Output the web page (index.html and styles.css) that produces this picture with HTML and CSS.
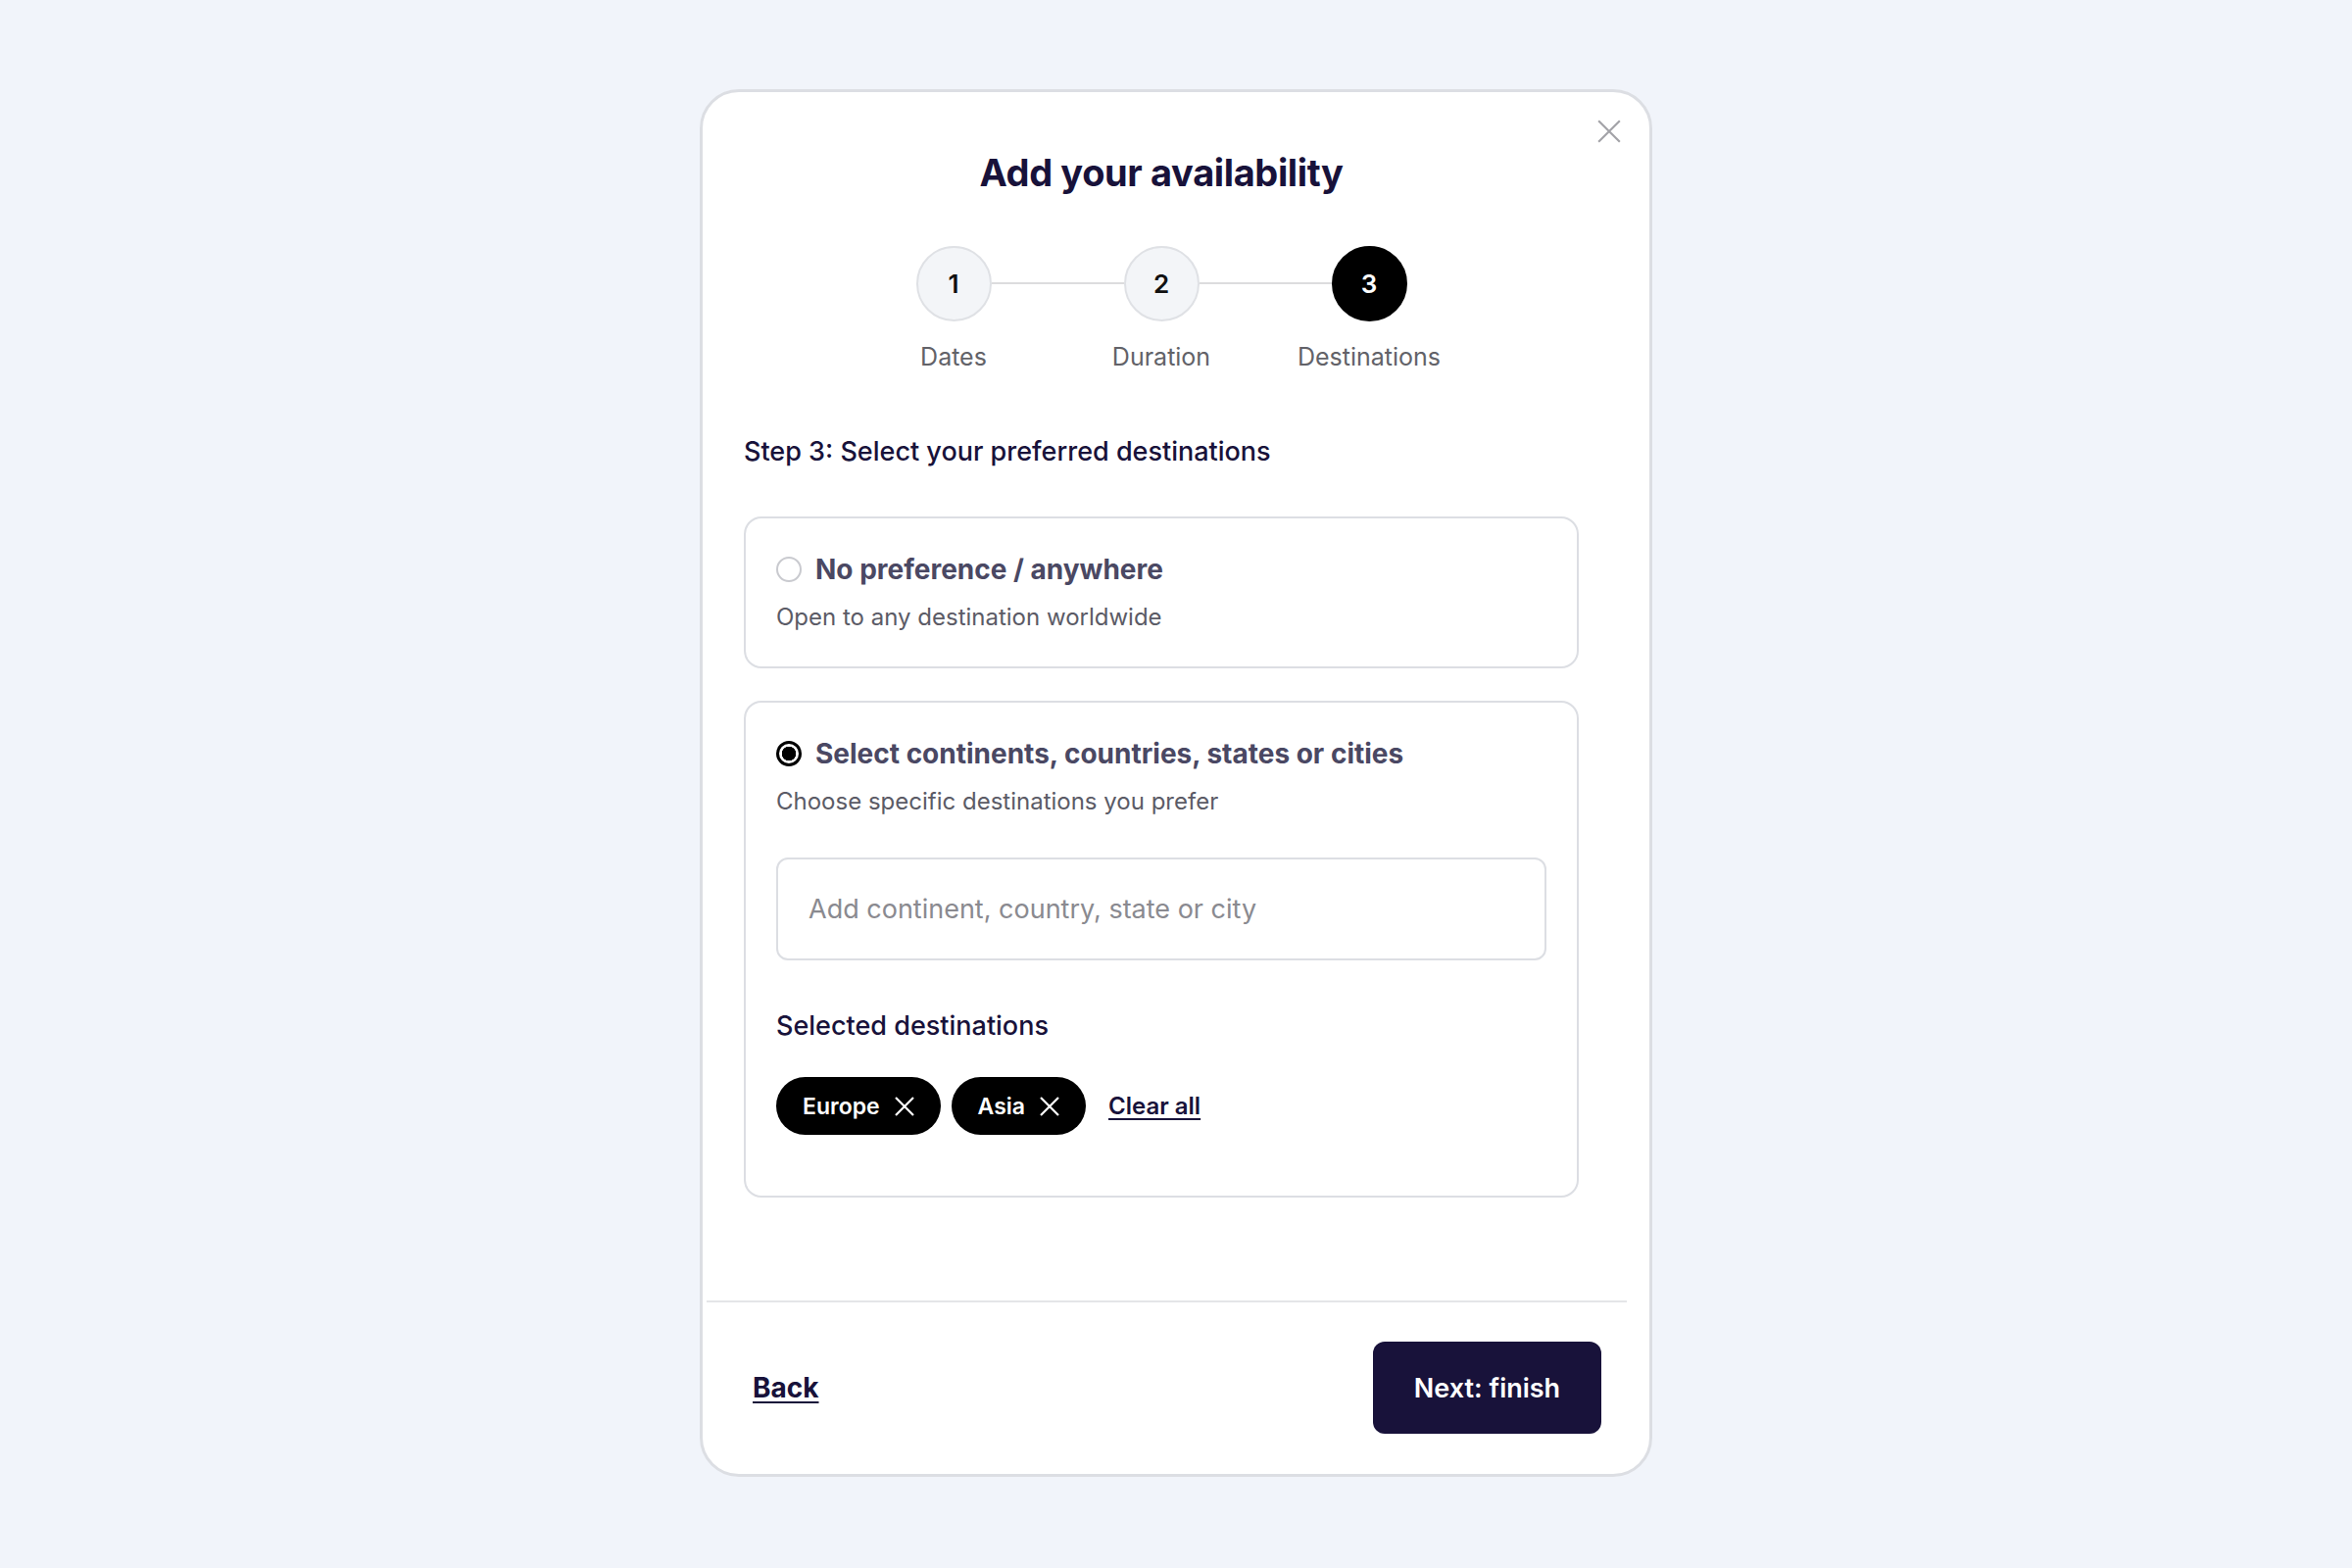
FILE: index.html
```html
<!DOCTYPE html>
<html lang="en">
<head>
    <meta charset="UTF-8">
    <meta name="viewport" content="width=device-width, initial-scale=1.0">
    <title>Add your availability</title>
    <link rel="stylesheet" href="styles.css">
</head>
<body>
    <div class="modal">
        <button class="close-btn" aria-label="Close">
            <svg viewBox="0 0 24 24" width="26" height="26"><path d="M2 2L22 22M22 2L2 22" stroke="currentColor" stroke-width="2" fill="none"/></svg>
        </button>

        <div class="modal-body">
            <h1 class="modal-title">Add your availability</h1>

            <div class="stepper">
                <div class="step">
                    <div class="step-circle">1</div>
                    <div class="step-label">Dates</div>
                </div>
                <div class="step-line"></div>
                <div class="step">
                    <div class="step-circle">2</div>
                    <div class="step-label">Duration</div>
                </div>
                <div class="step-line"></div>
                <div class="step">
                    <div class="step-circle active">3</div>
                    <div class="step-label">Destinations</div>
                </div>
            </div>

            <h2 class="step-heading">Step 3: Select your preferred destinations</h2>

            <div class="option-card">
                <div class="option-head">
                    <span class="radio"></span>
                    <span class="option-title">No preference / anywhere</span>
                </div>
                <p class="option-desc">Open to any destination worldwide</p>
            </div>

            <div class="option-card">
                <div class="option-head">
                    <span class="radio checked"></span>
                    <span class="option-title">Select continents, countries, states or cities</span>
                </div>
                <p class="option-desc">Choose specific destinations you prefer</p>

                <input class="search-input" type="text" placeholder="Add continent, country, state or city">

                <h3 class="selected-title">Selected destinations</h3>
                <div class="chips">
                    <span class="chip">Europe
                        <svg viewBox="0 0 24 24" width="24" height="24"><path d="M3 3L21 21M21 3L3 21" stroke="currentColor" stroke-width="2.2" fill="none"/></svg>
                    </span>
                    <span class="chip">Asia
                        <svg viewBox="0 0 24 24" width="24" height="24"><path d="M3 3L21 21M21 3L3 21" stroke="currentColor" stroke-width="2.2" fill="none"/></svg>
                    </span>
                    <a href="#" class="clear-all">Clear all</a>
                </div>
            </div>
        </div>

        <div class="modal-footer">
            <a href="#" class="back-link">Back</a>
            <button class="next-btn">Next: finish</button>
        </div>
    </div>
</body>
</html>
```

FILE: styles.css
```css
:root {
    --navy: #18123a;
    --text-muted: #5b5b66;
    --option-text: #4a4863;
    --border: #dcdee3;
    --background: #f1f4fa;
}

* {
    margin: 0;
    padding: 0;
    box-sizing: border-box;
}

body {
    font-family: 'Inter', sans-serif;
    background: var(--background);
    color: var(--navy);
    padding-top: 91px;
}

.modal {
    position: relative;
    width: 972px;
    margin: 0 auto;
    background: #fff;
    border: 3px solid var(--border);
    border-radius: 40px;
    padding-bottom: 41px;
}

.close-btn {
    position: absolute;
    top: 27px;
    right: 28px;
    background: none;
    border: none;
    color: #a3a3a8;
}

.modal-body {
    padding: 57px 72px 0 42px;
}

.modal-title {
    text-align: center;
    font-size: 38px;
    font-weight: 700;
    letter-spacing: -0.01em;
    line-height: 50px;
}

/* stepper */
.stepper {
    display: flex;
    justify-content: center;
    align-items: flex-start;
    margin-top: 50px;
}

.step {
    display: flex;
    flex-direction: column;
    align-items: center;
    width: 77px;
}

.step-circle {
    width: 77px;
    height: 77px;
    border-radius: 50%;
    border: 2px solid #dfe1e5;
    background: #f3f5f8;
    display: flex;
    align-items: center;
    justify-content: center;
    font-size: 26px;
    font-weight: 600;
    color: #111;
}

.step-circle.active {
    background: #000;
    border-color: #000;
    color: #fff;
}

.step-label {
    margin-top: 20px;
    font-size: 25px;
    line-height: 32px;
    color: #626268;
    white-space: nowrap;
}

.step-line {
    width: 135px;
    height: 2px;
    background: #dcdcde;
    margin-top: 37px;
}

.step-heading {
    margin-top: 63px;
    font-size: 27px;
    font-weight: 500;
    line-height: 36px;
}

/* option cards */
.option-card {
    margin-top: 48px;
    border: 2px solid var(--border);
    border-radius: 18px;
    padding: 34px 31px 34px;
}

.option-card + .option-card {
    margin-top: 33px;
    padding-bottom: 62px;
}

.option-head {
    display: flex;
    align-items: center;
    gap: 14px;
    height: 36px;
}

.radio {
    width: 26px;
    height: 26px;
    border-radius: 50%;
    border: 2px solid #c9cacf;
    flex-shrink: 0;
}

.radio.checked {
    border: 3px solid #000;
    background: radial-gradient(circle, #000 0 7px, #fff 7.5px);
}

.option-title {
    font-size: 28px;
    font-weight: 700;
    color: var(--option-text);
}

.option-desc {
    margin-top: 15px;
    font-size: 24px;
    line-height: 32px;
    color: var(--text-muted);
}

.search-input {
    display: block;
    width: 100%;
    height: 105px;
    margin-top: 41px;
    border: 2px solid var(--border);
    border-radius: 12px;
    padding: 0 31px;
    font-family: inherit;
    font-size: 27px;
    color: var(--navy);
    outline: none;
}

.search-input::placeholder {
    color: #8a8a90;
}

.selected-title {
    margin-top: 49px;
    font-size: 27px;
    font-weight: 500;
    line-height: 36px;
}

.chips {
    display: flex;
    align-items: center;
    gap: 11px;
    margin-top: 34px;
}

.chip {
    display: inline-flex;
    align-items: center;
    gap: 13px;
    height: 59px;
    padding: 0 25px 0 27px;
    background: #000;
    color: #fff;
    border-radius: 30px;
    font-size: 23px;
    font-weight: 600;
}

.clear-all {
    margin-left: 12px;
    font-size: 24px;
    font-weight: 600;
    color: var(--navy);
    text-decoration-thickness: 2px;
    text-underline-offset: 4px;
}

/* footer */
.modal-footer {
    margin: 105px 23px 0 4px;
    border-top: 2px solid #e4e5e8;
    padding: 40px 26px 0 47px;
    display: flex;
    justify-content: space-between;
    align-items: center;
}

.back-link {
    font-size: 28px;
    font-weight: 700;
    color: var(--navy);
    text-decoration-thickness: 2px;
    text-underline-offset: 4px;
}

.next-btn {
    width: 233px;
    height: 94px;
    border: none;
    border-radius: 12px;
    background: var(--navy);
    color: #fff;
    font-family: inherit;
    font-size: 27px;
    font-weight: 600;
}
```
